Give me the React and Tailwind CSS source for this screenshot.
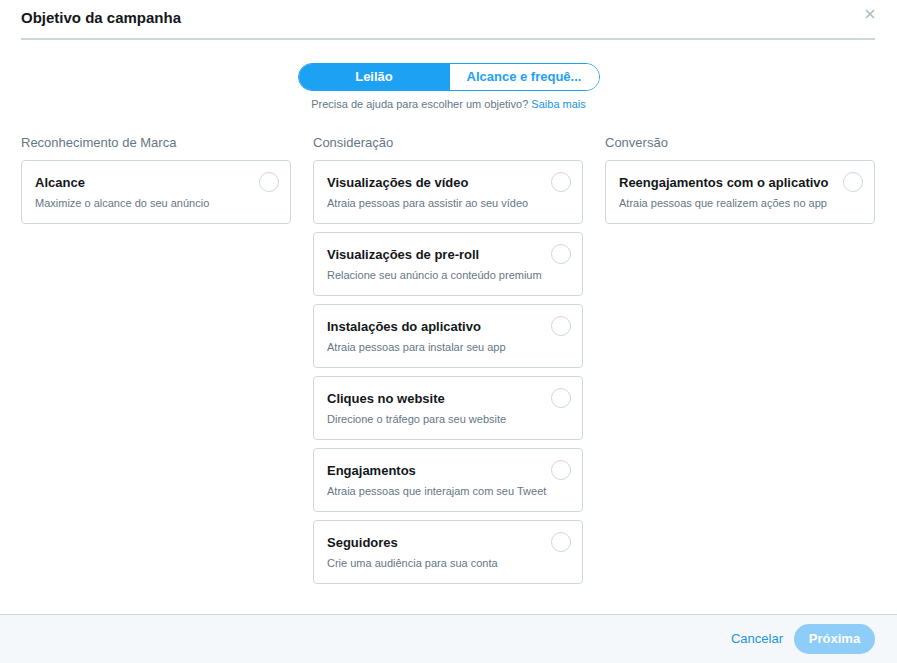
import React, { useState } from "react";

const columns = [
  {
    title: "Reconhecimento de Marca",
    items: [{ name: "Alcance", desc: "Maximize o alcance do seu anúncio" }],
  },
  {
    title: "Consideração",
    items: [
      { name: "Visualizações de vídeo", desc: "Atraia pessoas para assistir ao seu vídeo" },
      { name: "Visualizações de pre-roll", desc: "Relacione seu anúncio a conteúdo premium" },
      { name: "Instalações do aplicativo", desc: "Atraia pessoas para instalar seu app" },
      { name: "Cliques no website", desc: "Direcione o tráfego para seu website" },
      { name: "Engajamentos", desc: "Atraia pessoas que interajam com seu Tweet" },
      { name: "Seguidores", desc: "Crie uma audiência para sua conta" },
    ],
  },
  {
    title: "Conversão",
    items: [{ name: "Reengajamentos com o aplicativo", desc: "Atraia pessoas que realizem ações no app" }],
  },
];

function Card({ item }) {
  return (
    <div className="flex h-[64px] items-start justify-between rounded border border-[#ccd6dd] bg-white pl-[13px] pr-[11px] pt-[14px]">
      <div className="flex flex-col">
        <span className="text-[13px] font-bold leading-[16px] text-[#14171a]">{item.name}</span>
        <span className="mt-[5px] text-[11px] leading-[14px] text-[#657786]">{item.desc}</span>
      </div>
      <span className="-mt-[3px] h-[20px] w-[20px] shrink-0 rounded-full border border-[#ccd6dd] bg-white" />
    </div>
  );
}

export default function App() {
  const [tab, setTab] = useState("leilao");
  return (
    <div className="flex h-[663px] w-[897px] flex-col bg-white font-['Liberation_Sans',Arial,sans-serif]">
      <div className="relative pl-[21px] pr-[22px] pt-[9px]">
        <h1 className="text-[15px] font-bold leading-[18px] text-[#14171a]">Objetivo da campanha</h1>
        <button className="absolute right-[22px] top-[9px] text-[#aab8c2]">
          <svg width="10" height="10" viewBox="0 0 10 10" stroke="currentColor" strokeWidth="1.5">
            <path d="M1 1L9 9M9 1L1 9" />
          </svg>
        </button>
        <div className="mt-[11px] h-[2px] bg-[#ccd6dd]" />
      </div>

      <div className="mt-[23px] flex flex-col items-center">
        <div className="flex h-[28px] w-[302px] overflow-hidden rounded-full border border-[#1da1f2] text-[13px] font-bold">
          <button
            onClick={() => setTab("leilao")}
            className={`w-[151px] ${tab === "leilao" ? "bg-[#1da1f2] text-white" : "bg-white text-[#1da1f2]"}`}
          >
            Leilão
          </button>
          <button
            onClick={() => setTab("alcance")}
            className={`flex-1 ${tab === "alcance" ? "bg-[#1da1f2] text-white" : "bg-white text-[#1da1f2]"}`}
          >
            Alcance e frequê...
          </button>
        </div>
        <p className="mt-[6px] text-[11px] leading-[14px] text-[#657786]">
          Precisa de ajuda para escolher um objetivo? <a className="text-[#1b95e0]">Saiba mais</a>
        </p>
      </div>

      <div className="mt-[24px] grid grid-cols-3 gap-[22px] pl-[21px] pr-[22px]">
        {columns.map((col) => (
          <div key={col.title} className="flex flex-col">
            <h2 className="text-[13px] leading-[16px] text-[#657786]">{col.title}</h2>
            <div className="mt-[9px] flex flex-col gap-[8px]">
              {col.items.map((item) => (
                <Card key={item.name} item={item} />
              ))}
            </div>
          </div>
        ))}
      </div>

      <div className="mt-auto flex h-[49px] items-center justify-end gap-[11px] border-t border-[#ccd6dd] bg-[#f5f8fa] px-[22px]">
        <button className="text-[13px] text-[#1b95e0]">Cancelar</button>
        <button className="h-[30px] w-[81px] rounded-full bg-[#8ecdf8] text-[13px] font-bold text-white">Próxima</button>
      </div>
    </div>
  );
}
